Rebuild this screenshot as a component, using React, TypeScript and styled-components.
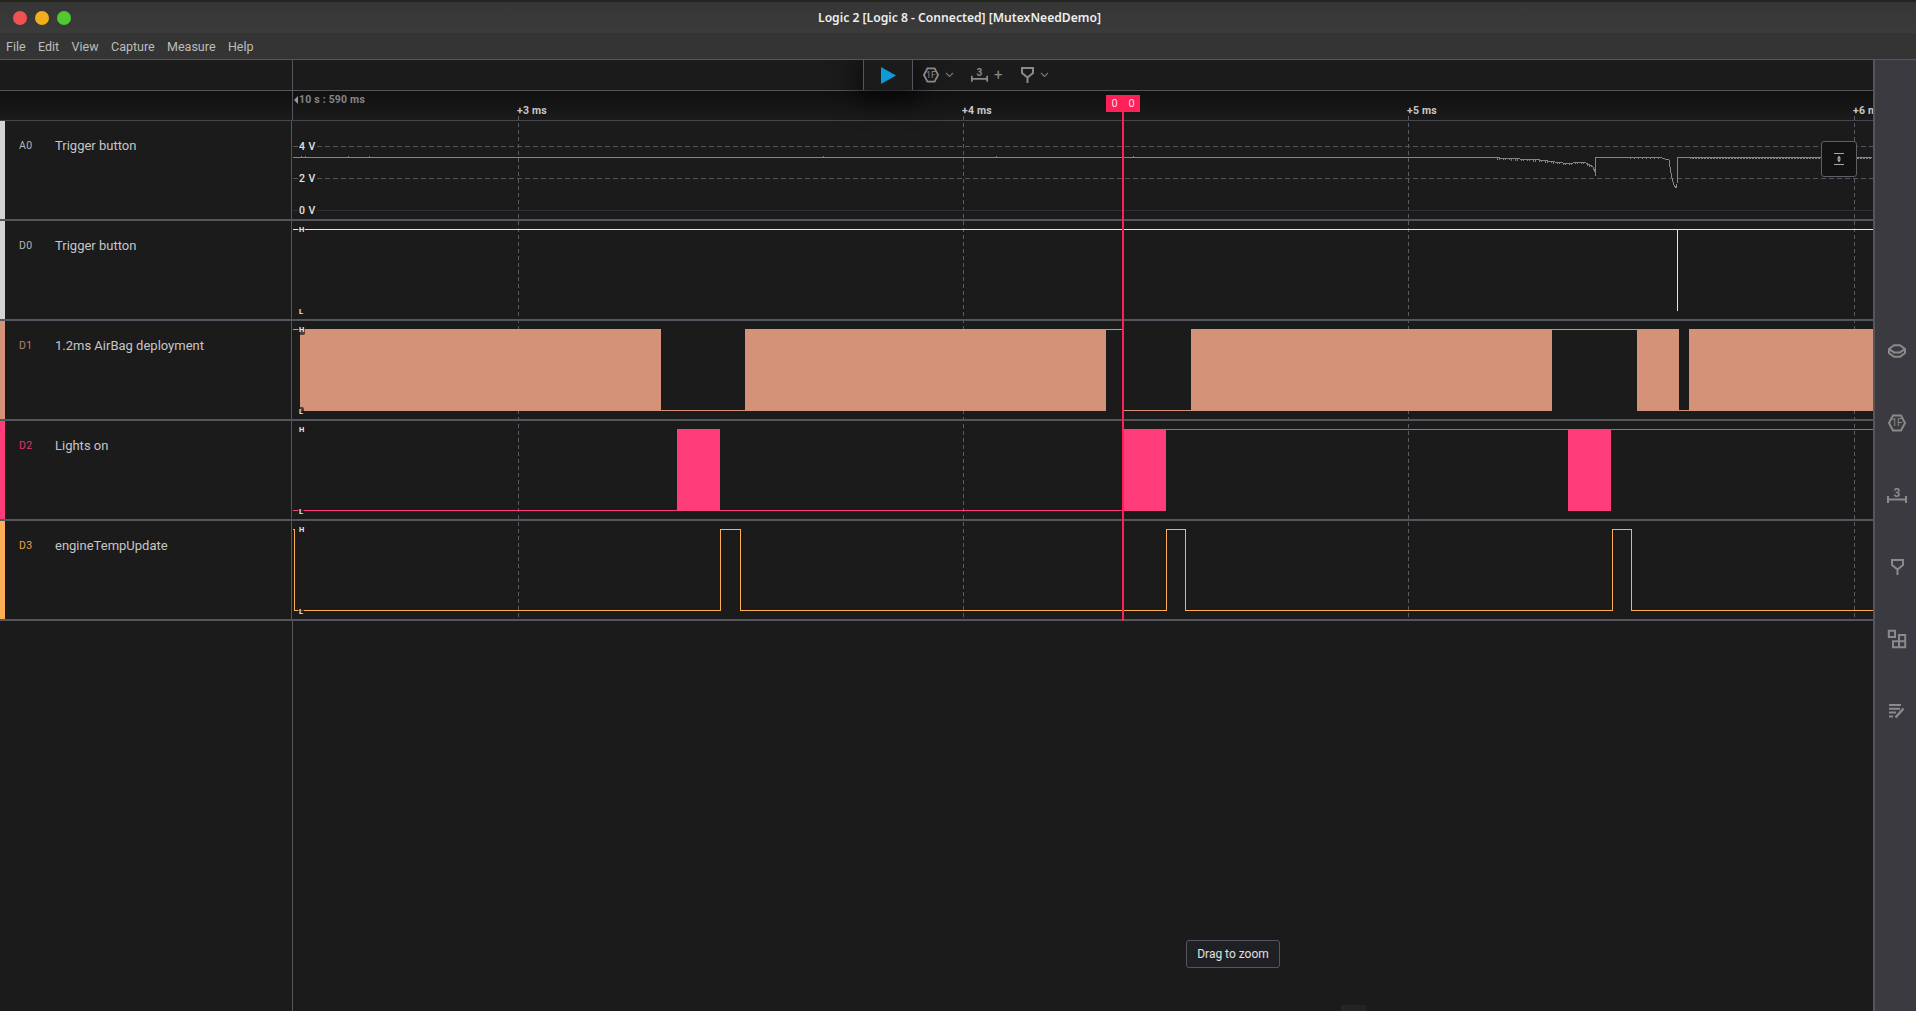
import styled, { createGlobalStyle } from "styled-components";

const GlobalStyle = createGlobalStyle`
  html, body {
    margin: 0;
    height: 100%;
    background: #1b1b1c;
    overflow: hidden;
  }
  body {
    font-family: Roboto, "Liberation Sans", sans-serif;
  }
`;

const MENU = ["File", "Edit", "View", "Capture", "Measure", "Help"];
const TICKS = [
  { x: 518, label: "+3 ms" },
  { x: 963, label: "+4 ms" },
  { x: 1408, label: "+5 ms" },
  { x: 1854, label: "+6 ms" },
];

const HIGH = 8.5;
const LOW = 89.5;

const SAG = [
  [1480, 36.5],
  [1500, 37],
  [1540, 39],
  [1563, 42],
  [1572, 42.5],
  [1575, 41],
  [1585, 41.5],
  [1590, 44],
  [1594, 46],
];

function sagAt(x: number) {
  for (let i = 1; i < SAG.length; i++) {
    const [x0, y0] = SAG[i - 1];
    const [x1, y1] = SAG[i];
    if (x <= x1) return y0 + ((y1 - y0) * (x - x0)) / (x1 - x0);
  }
  return 46;
}

// small stubs on the analog line, they look like noise on the real capture
function noisePath() {
  let d = "M301 35V36.5M305 35V36.5M348 35V36.5M369 35V36.5M823 35V36.5M996 35V36.5M1133 35V36.5";
  for (let x = 1497; x < 1594; x += 2 + (x % 3)) {
    const y = Math.round(sagAt(x));
    d += `M${x} ${y}V${y + 1.5}`;
  }
  for (let x = 1630; x < 1665; x += 2 + (x % 4)) d += `M${x} 36.5V38`;
  for (let x = 1690; x < 1872; x += 1 + (x % 3)) d += `M${x} 36.5V38`;
  return d;
}

const ANALOG =
  "M293 36.5H1480L1500 37L1540 39L1563 42L1572 42.5L1575 41L1585 41.5L1590 44L1593 46L1595 51V55V35.5V36.5" +
  "H1660L1669 39L1670.5 49L1672 57L1674 64L1676 67L1677 63L1677.5 36.5H1872";

const CHANNELS = [
  {
    code: "D1",
    name: "1.2ms AirBag deployment",
    color: "#d49278",
    codeColor: "#b9806a",
    bars: [
      [300, 661],
      [745, 1106],
      [1191, 1552],
      [1637, 1679],
      [1689, 1873],
    ],
    line: `M293 ${HIGH}H300M661 ${LOW}H745M1106 ${HIGH}H1123M1123 ${LOW}H1191M1552 ${HIGH}H1637M1679 ${LOW}H1689`,
  },
  {
    code: "D2",
    name: "Lights on",
    color: "#ff3d7a",
    codeColor: "#e8306c",
    bars: [
      [677, 720],
      [1123, 1166],
      [1568, 1611],
    ],
    line: `M293 ${LOW}H677M720 ${LOW}H1123M1166 ${HIGH}H1568M1611 ${HIGH}H1873`,
  },
  {
    code: "D3",
    name: "engineTempUpdate",
    color: "#ffb056",
    codeColor: "#e8a04e",
    bars: [],
    line: `M293 ${HIGH}H294.5V${LOW}H720.5V${HIGH}H740.5V${LOW}H1166.5V${HIGH}H1185.5V${LOW}H1612.5V${HIGH}H1631.5V${LOW}H1873`,
  },
];

function HexIcon({ size = 18 }: { size?: number }) {
  return (
    <IconSvg width={size} height={size} viewBox="0 0 18 18">
      <polygon points="5,1.5 13,1.5 17,9 13,16.5 5,16.5 1,9" />
      <IconLabel x="9" y="12.4" fontSize="10">
        1F
      </IconLabel>
    </IconSvg>
  );
}

function SpanIcon({ width = 20, height = 16 }: { width?: number; height?: number }) {
  return (
    <IconSvg width={width} height={height} viewBox="0 0 20 16">
      <path d="M1 9V16M19 9V16M1 12.5H19" />
      <IconLabel x="10" y="9.5" fontSize="12" fontWeight="700">
        3
      </IconLabel>
    </IconSvg>
  );
}

function TriggerIcon({ width = 13, height = 16 }: { width?: number; height?: number }) {
  return (
    <IconSvg width={width} height={height} viewBox="0 0 13 16">
      <path d="M1 1H12V6L6.5 10.5L1 6ZM6.5 10.5V16" />
    </IconSvg>
  );
}

function Chevron() {
  return (
    <ChevronSvg width="9" height="6" viewBox="0 0 9 6">
      <path d="M1 1L4.5 4.5L8 1" />
    </ChevronSvg>
  );
}

function LayersIcon() {
  return (
    <IconSvg width="18" height="14" viewBox="0 0 18 14">
      <path d="M1 5L6 1.2H12L17 5V9L12 12.8H6L1 9ZM1 5L6 8.4H12L17 5" />
    </IconSvg>
  );
}

function GroupIcon() {
  return (
    <IconSvg width="18" height="18" viewBox="0 0 18 18">
      <path d="M.8.8H7V7H.8ZM11 5H17.2V11.2H11ZM5 11.2H11V17.2H5ZM11 11.2H17.2V17.2H11Z" />
    </IconSvg>
  );
}

function NotesIcon() {
  return (
    <IconSvg width="16" height="15" viewBox="0 0 16 15">
      <path d="M0 1H12M0 4.8H11M0 8.6H7M0 12.6H4" />
      <path d="M6.5 13.5L14.5 4.5" strokeWidth="2.6" />
    </IconSvg>
  );
}

function FitIcon() {
  return (
    <FitSvg width="12" height="14" viewBox="0 0 12 14">
      <path d="M1 1.5H11M1 12.5H11" />
      <polygon points="6,3.5 8,6.5 6.6,6.5 6.6,7.5 8,7.5 6,10.5 4,7.5 5.4,7.5 5.4,6.5 4,6.5" />
    </FitSvg>
  );
}

function DigitalTrace({ color, bars, line }: { color: string; bars: number[][]; line: string }) {
  return (
    <TraceArea>
      <Wave viewBox="293 0 1580 98">
        {bars.map(([from, to]) => (
          <rect key={from} x={from} y={8} width={to - from} height={82} fill={color} />
        ))}
        <path d={line} stroke={color} fill="none" />
      </Wave>
      <LevelTag $top={4}>H</LevelTag>
      <LevelTag $top={86}>L</LevelTag>
    </TraceArea>
  );
}

function App() {
  return (
    <>
      <GlobalStyle />
      <Window>
        <TitleBar>
          <Lights>
            <Light $color="#ee5350" />
            <Light $color="#f1af1c" />
            <Light $color="#50c932" />
          </Lights>
          <Title>Logic 2 [Logic 8 - Connected] [MutexNeedDemo]</Title>
        </TitleBar>
        <MenuBar>
          {MENU.map((item) => (
            <MenuItem key={item}>{item}</MenuItem>
          ))}
        </MenuBar>
        <Main>
          <Workspace>
            <ToolbarRow>
              <LeftCell />
              <Toolbar>
                <PlayButton>
                  <svg width="15" height="17" viewBox="0 0 15 17">
                    <polygon points="0,0 15,8.5 0,17" fill="#0c9ad9" />
                  </svg>
                </PlayButton>
                <ToolGroup $width={48}>
                  <HexIcon size={16} />
                  <Chevron />
                </ToolGroup>
                <ToolGroup $width={50}>
                  <SpanIcon width={17} height={16} />
                  <Plus>+</Plus>
                </ToolGroup>
                <ToolGroup $width={34}>
                  <TriggerIcon />
                  <Chevron />
                </ToolGroup>
              </Toolbar>
            </ToolbarRow>

            <RulerRow>
              <LeftCell />
              <Ruler>
                <Origin>
                  <OriginArrow />
                  10 s : 590 ms
                </Origin>
                {TICKS.map((tick) => (
                  <TickLabel key={tick.label} $x={tick.x - 294}>
                    {tick.label}
                  </TickLabel>
                ))}
              </Ruler>
            </RulerRow>

            <Channels>
              {TICKS.map((tick) => (
                <GridLine key={tick.x} $x={tick.x} />
              ))}

              <ChannelRow>
                <ChannelInfo $color="#d4d4d4">
                  <ChannelCode $color="#b5b5b5">A0</ChannelCode>
                  <ChannelName>Trigger button</ChannelName>
                </ChannelInfo>
                <TraceArea>
                  <Wave viewBox="293 0 1580 98">
                    <path d="M293 25.5H1873M293 57.5H1873" stroke="#55555e" strokeDasharray="5 3" fill="none" />
                    <path d="M293 89.5H1873" stroke="#2f2f36" fill="none" />
                    <path d={noisePath()} stroke="#7f7f7f" fill="none" />
                    <AnalogPath d={ANALOG} />
                  </Wave>
                  <VoltTag $top={18}>4 V</VoltTag>
                  <VoltTag $top={50}>2 V</VoltTag>
                  <VoltTag $top={82}>0 V</VoltTag>
                  <FitButton>
                    <FitIcon />
                  </FitButton>
                </TraceArea>
              </ChannelRow>

              <ChannelRow>
                <ChannelInfo $color="#d4d4d4">
                  <ChannelCode $color="#b5b5b5">D0</ChannelCode>
                  <ChannelName>Trigger button</ChannelName>
                </ChannelInfo>
                <TraceArea>
                  <Wave viewBox="293 0 1580 98">
                    <path d={`M293 ${HIGH}H1873M1677.5 ${HIGH}V${LOW}`} stroke="#e6e6e6" fill="none" />
                  </Wave>
                  <LevelTag $top={4}>H</LevelTag>
                  <LevelTag $top={86}>L</LevelTag>
                </TraceArea>
              </ChannelRow>

              {CHANNELS.map((channel) => (
                <ChannelRow key={channel.code}>
                  <ChannelInfo $color={channel.color}>
                    <ChannelCode $color={channel.codeColor}>{channel.code}</ChannelCode>
                    <ChannelName>{channel.name}</ChannelName>
                  </ChannelInfo>
                  <DigitalTrace color={channel.color} bars={channel.bars} line={channel.line} />
                </ChannelRow>
              ))}

              <CursorLine />
              <CursorFlag>
                <span>0</span>
                <span>0</span>
              </CursorFlag>
            </Channels>

            <EmptyArea>
              <LeftCell />
            </EmptyArea>

            <ZoomHint>Drag to zoom</ZoomHint>
            <ScrollNub />
          </Workspace>

          <Sidebar>
            <SideSlot>
              <LayersIcon />
            </SideSlot>
            <SideSlot>
              <HexIcon />
            </SideSlot>
            <SideSlot>
              <SpanIcon />
            </SideSlot>
            <SideSlot>
              <TriggerIcon />
            </SideSlot>
            <SideSlot>
              <GroupIcon />
            </SideSlot>
            <SideSlot>
              <NotesIcon />
            </SideSlot>
          </Sidebar>
        </Main>
      </Window>
    </>
  );
}

const Window = styled.div`
  width: 1916px;
  height: 1011px;
  display: flex;
  flex-direction: column;
  overflow: hidden;
  background: #1b1b1c;
`;

const TitleBar = styled.header`
  position: relative;
  height: 33px;
  box-sizing: border-box;
  padding-top: 3px;
  display: flex;
  align-items: center;
  justify-content: center;
  border-top: 2px solid #24241f;
  background: linear-gradient(#353535, #3b3b3b);
`;

const Lights = styled.div`
  position: absolute;
  left: 13px;
  top: 9px;
  display: flex;
  gap: 8px;
`;

const Light = styled.span<{ $color: string }>`
  width: 14px;
  height: 14px;
  border-radius: 50%;
  background: ${({ $color }) => $color};
`;

const Title = styled.div`
  margin-top: -3px;
  margin-left: 3px;
  font-family: "Noto Sans", sans-serif;
  font-size: 12.15px;
  font-weight: 600;
  color: #eeeeee;
  white-space: nowrap;
`;

const MenuBar = styled.nav`
  height: 26px;
  display: flex;
  align-items: center;
  gap: 12.4px;
  padding-left: 6px;
  background: #343434;
  border-bottom: 1px solid #55555e;
`;

const MenuItem = styled.span`
  font-size: 12.5px;
  color: #bdbdbd;
`;

const Main = styled.main`
  flex: 1;
  min-height: 0;
  display: flex;
`;

const Workspace = styled.section`
  position: relative;
  flex: 1;
  min-width: 0;
  display: flex;
  flex-direction: column;
  overflow: hidden;
`;

const LeftCell = styled.div`
  flex: none;
  width: 292px;
  border-right: 1px solid #55555e;
`;

const ToolbarRow = styled.div`
  position: relative;
  z-index: 2;
  flex: none;
  height: 30px;
  display: flex;
  border-bottom: 1px solid #55555e;
  background: #1b1b1c;
`;

const Toolbar = styled.div`
  display: flex;
  align-items: center;
  height: 30px;
  margin-left: 570px;
`;

const PlayButton = styled.div`
  width: 48px;
  height: 30px;
  display: flex;
  align-items: center;
  justify-content: center;
  background: #1b1b1c;
  border-left: 1px solid #55555e;
  border-right: 1px solid #55555e;
  box-shadow: 0 6px 26px 6px rgba(0, 0, 0, 0.6);
  margin-right: 10px;
`;

const ToolGroup = styled.div<{ $width: number }>`
  width: ${({ $width }) => $width}px;
  display: flex;
  align-items: center;
  gap: 6px;
`;

const Plus = styled.span`
  font-size: 15px;
  line-height: 1;
  color: #8a8a8a;
`;

const IconSvg = styled.svg`
  flex: none;
  fill: none;
  stroke: #8a8a8a;
  stroke-width: 2;
  overflow: visible;
`;

const IconLabel = styled.text`
  font-family: Roboto, sans-serif;
  text-anchor: middle;
  fill: #8a8a8a;
  stroke: none;
`;

const ChevronSvg = styled.svg`
  fill: none;
  stroke: #777777;
  stroke-width: 1.1;
`;

const RulerRow = styled.div`
  flex: none;
  height: 29px;
  display: flex;
  border-bottom: 1px solid #46464c;
  background: linear-gradient(#101011, #1b1b1c);
`;

const Ruler = styled.div`
  position: relative;
  flex: 1;
`;

const Origin = styled.div`
  position: absolute;
  left: 1px;
  top: 2px;
  display: flex;
  align-items: center;
  gap: 1px;
  font-size: 10.5px;
  font-weight: 700;
  letter-spacing: 0.2px;
  color: #858585;
`;

const OriginArrow = styled.span`
  border-style: solid;
  border-width: 4px 4px 4px 0;
  border-color: transparent #9a9a9a transparent transparent;
`;

const TickLabel = styled.span<{ $x: number }>`
  position: absolute;
  left: ${({ $x }) => $x}px;
  top: 13px;
  font-size: 10.5px;
  font-weight: 700;
  letter-spacing: 0.2px;
  color: #c8c8c8;
  white-space: nowrap;
`;

const Channels = styled.div`
  position: relative;
  flex: none;
`;

const GridLine = styled.div<{ $x: number }>`
  position: absolute;
  left: ${({ $x }) => $x}px;
  top: -5px;
  bottom: 1px;
  width: 1px;
  background: repeating-linear-gradient(#5a5a63 0 4px, transparent 4px 7px);
`;

const ChannelRow = styled.div`
  position: relative;
  height: 98px;
  display: flex;
  border-bottom: 2px solid #55555e;
`;

const ChannelInfo = styled.div<{ $color: string }>`
  flex: none;
  width: 292px;
  box-sizing: border-box;
  display: flex;
  align-items: flex-start;
  padding: 17px 0 0 14px;
  background: #1b1b1c;
  border-left: 5px solid ${({ $color }) => $color};
  border-right: 1px solid #55555e;
`;

const ChannelCode = styled.span<{ $color: string }>`
  width: 36px;
  line-height: 16px;
  font-size: 10.5px;
  letter-spacing: 0.3px;
  color: ${({ $color }) => $color};
`;

const ChannelName = styled.span`
  line-height: 16px;
  font-size: 13px;
  color: #c6c6c6;
`;

const TraceArea = styled.div`
  position: relative;
  flex: 1;
  margin-left: 1px;
`;

const Wave = styled.svg`
  display: block;
  width: 1580px;
  height: 98px;
  shape-rendering: crispEdges;
`;

const AnalogPath = styled.path`
  fill: none;
  stroke: #858585;
  stroke-width: 1;
`;

const LevelTag = styled.span<{ $top: number }>`
  position: absolute;
  left: 5px;
  top: ${({ $top }) => $top}px;
  padding: 0 1px;
  height: 10px;
  line-height: 10px;
  border-radius: 2px;
  background: rgba(27, 27, 28, 0.7);
  font-size: 7.5px;
  font-weight: 700;
  color: #e8e8e8;
`;

const VoltTag = styled.span<{ $top: number }>`
  position: absolute;
  left: 5px;
  top: ${({ $top }) => $top}px;
  padding: 0 1px;
  height: 15px;
  line-height: 15px;
  background: #1b1b1c;
  font-size: 10.5px;
  font-weight: 500;
  letter-spacing: 0.4px;
  color: #e2e2e2;
`;

const FitButton = styled.div`
  position: absolute;
  left: 1528px;
  top: 20px;
  width: 36px;
  height: 36px;
  box-sizing: border-box;
  display: flex;
  align-items: center;
  justify-content: center;
  border: 1px solid #5f5f68;
  border-radius: 3px;
  background: #131314;
`;

const FitSvg = styled.svg`
  fill: none;
  stroke: #a8a8a8;
  stroke-width: 1;

  polygon {
    fill: #a8a8a8;
    stroke: none;
  }
`;

const CursorLine = styled.div`
  position: absolute;
  left: 1122px;
  top: -9px;
  bottom: 0;
  width: 2px;
  background: #ff2058;
`;

const CursorFlag = styled.div`
  position: absolute;
  left: 1106px;
  top: -26px;
  width: 34px;
  height: 17px;
  display: flex;
  align-items: center;
  justify-content: space-around;
  background: #ff2058;
  font-size: 11px;
  color: #ffd9e2;
`;

const EmptyArea = styled.div`
  flex: 1;
  display: flex;
`;

const ZoomHint = styled.div`
  position: absolute;
  left: 1186px;
  top: 880px;
  width: 94px;
  height: 28px;
  box-sizing: border-box;
  display: flex;
  align-items: center;
  justify-content: center;
  border: 1px solid #55555e;
  border-radius: 3px;
  background: #1f2023;
  font-size: 12px;
  color: #e0e0e0;
`;

const ScrollNub = styled.div`
  position: absolute;
  left: 1341px;
  bottom: 0;
  width: 25px;
  height: 6px;
  background: #242425;
`;

const Sidebar = styled.aside`
  flex: none;
  width: 43px;
  box-sizing: border-box;
  padding: 255px 0 0 3px;
  display: flex;
  flex-direction: column;
  align-items: center;
  border-left: 2px solid #55555e;
  background: #3a3a40;
`;

const SideSlot = styled.div`
  height: 72px;
  display: flex;
  align-items: center;
  justify-content: center;
`;

export default App;
